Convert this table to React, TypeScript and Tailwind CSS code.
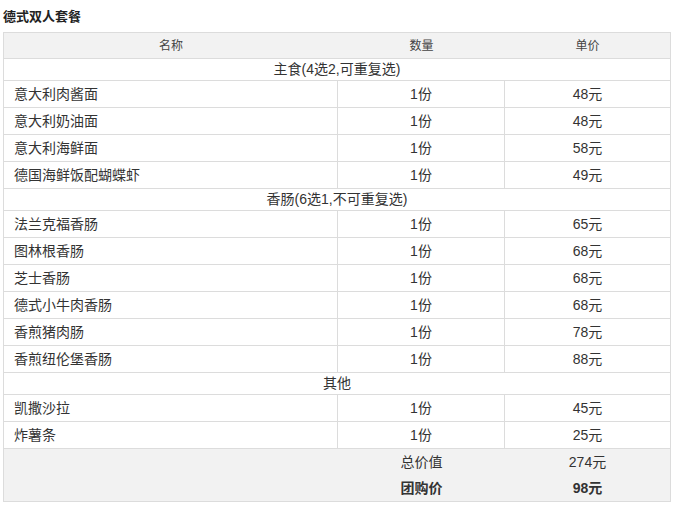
const sections = [
  {
    title: "主食(4选2,可重复选)",
    items: [
      { name: "意大利肉酱面", qty: "1份", price: "48元" },
      { name: "意大利奶油面", qty: "1份", price: "48元" },
      { name: "意大利海鲜面", qty: "1份", price: "58元" },
      { name: "德国海鲜饭配蝴蝶虾", qty: "1份", price: "49元" },
    ],
  },
  {
    title: "香肠(6选1,不可重复选)",
    items: [
      { name: "法兰克福香肠", qty: "1份", price: "65元" },
      { name: "图林根香肠", qty: "1份", price: "68元" },
      { name: "芝士香肠", qty: "1份", price: "68元" },
      { name: "德式小牛肉香肠", qty: "1份", price: "68元" },
      { name: "香煎猪肉肠", qty: "1份", price: "78元" },
      { name: "香煎纽伦堡香肠", qty: "1份", price: "88元" },
    ],
  },
  {
    title: "其他",
    items: [
      { name: "凯撒沙拉", qty: "1份", price: "45元" },
      { name: "炸薯条", qty: "1份", price: "25元" },
    ],
  },
];

const cols = "grid grid-cols-[334px_167px_165px]";

const App = () => {
  return (
    <div className="w-[674px] h-[505px] bg-white text-[#333] font-['Liberation_Sans','Noto_Sans_CJK_SC',sans-serif]">
      <div className="h-[32px] pl-[3px] pt-[10px] text-[13px] leading-[14px] font-bold text-[#222]">
        德式双人套餐
      </div>

      <div className="ml-[3px] w-[668px] border border-[#dcdcdc]">
        {/* header */}
        <div className={`${cols} h-[25px] bg-[#f2f2f2] text-[12px] text-[#444]`}>
          <div className="flex items-center justify-center">名称</div>
          <div className="flex items-center justify-center">数量</div>
          <div className="flex items-center justify-center">单价</div>
        </div>

        {sections.map((sec) => (
          <div key={sec.title}>
            <div className="h-[22px] border-t border-[#dcdcdc] flex items-center justify-center text-[14px]">
              {sec.title}
            </div>
            {sec.items.map((item) => (
              <div
                key={item.name}
                className={`${cols} h-[27px] border-t border-[#dcdcdc] text-[14px]`}
              >
                <div className="flex items-center pl-[10px] border-r border-[#dcdcdc]">{item.name}</div>
                <div className="flex items-center justify-center border-r border-[#dcdcdc]">{item.qty}</div>
                <div className="flex items-center justify-center">{item.price}</div>
              </div>
            ))}
          </div>
        ))}

        {/* totals */}
        <div className="border-t border-[#dcdcdc] bg-[#f2f2f2] text-[14px]">
          <div className={`${cols} h-[26px]`}>
            <div />
            <div className="flex items-center justify-center">总价值</div>
            <div className="flex items-center justify-center">274元</div>
          </div>
          <div className={`${cols} h-[26px] font-bold`}>
            <div />
            <div className="flex items-center justify-center">团购价</div>
            <div className="flex items-center justify-center">98元</div>
          </div>
        </div>
      </div>
    </div>
  );
};

export default App;
